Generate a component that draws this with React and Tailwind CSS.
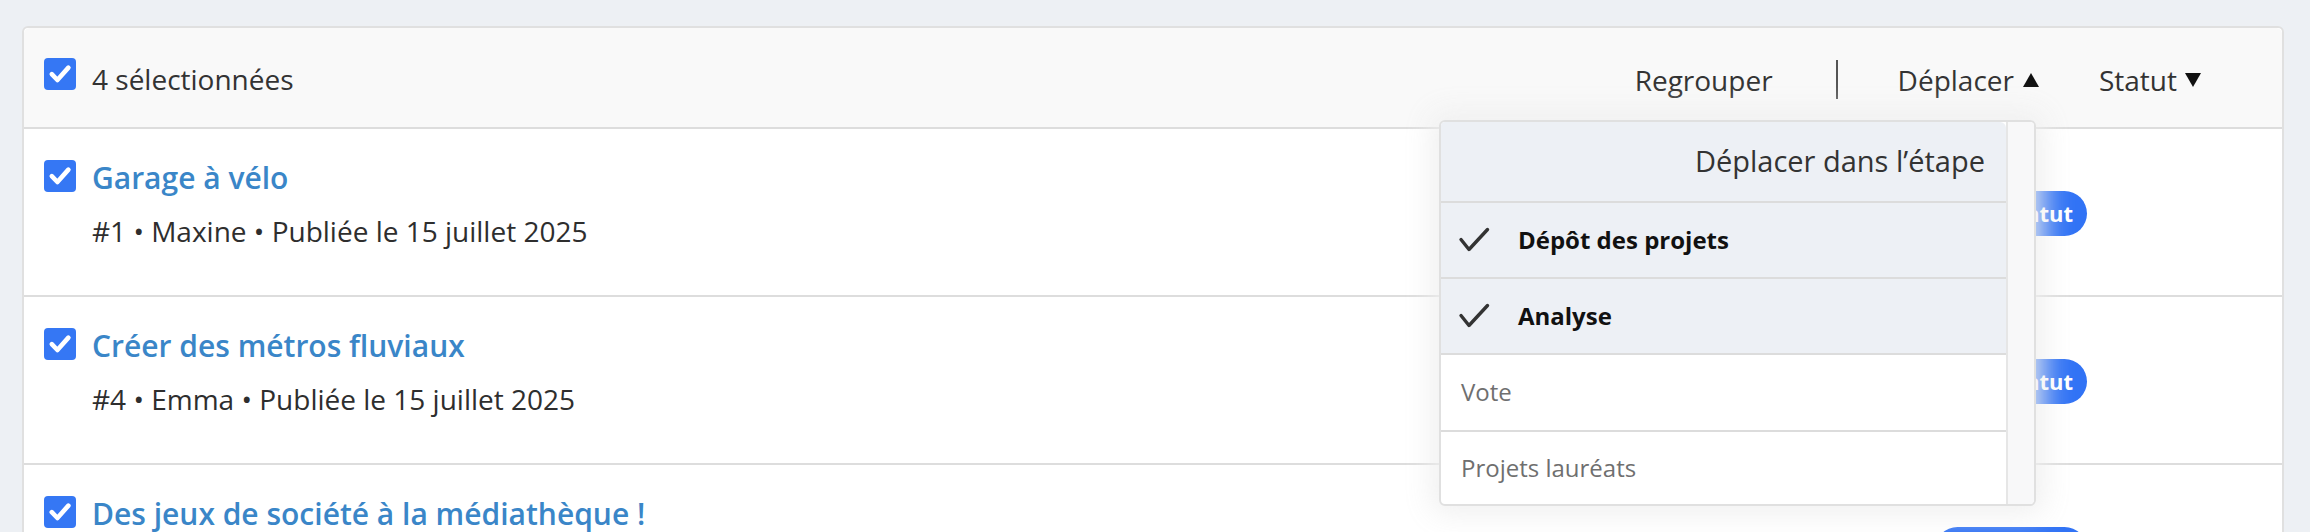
import React from 'react';

const proposals = [
  { id: 1, title: 'Garage à vélo', author: 'Maxine', date: '15 juillet 2025' },
  { id: 4, title: 'Créer des métros fluviaux', author: 'Emma', date: '15 juillet 2025' },
  { id: 6, title: 'Des jeux de société à la médiathèque !', author: 'Lucas', date: '15 juillet 2025' },
  { id: 9, title: 'Un potager partagé dans le parc', author: 'Inès', date: '15 juillet 2025' },
];

const stages = [
  { label: 'Dépôt des projets', checked: true },
  { label: 'Analyse', checked: true },
  { label: 'Vote', checked: false },
  { label: 'Projets lauréats', checked: false, last: true },
];

function Checkbox() {
  return (
    <svg width="32" height="32" viewBox="0 0 32 32" className="shrink-0">
      <rect width="32" height="32" rx="4" fill="#3577f4" />
      <path
        d="M7.8 16.2l5.6 5.8L24.4 9.6"
        fill="none"
        stroke="#fff"
        strokeWidth="4.6"
        strokeLinecap="round"
        strokeLinejoin="round"
      />
    </svg>
  );
}

function Caret({ up }) {
  return (
    <svg width="16" height="14" viewBox="0 0 16 14" className="shrink-0">
      <polygon points={up ? '8,0 16,14 0,14' : '0,0 16,0 8,14'} fill="#111" />
    </svg>
  );
}

function StageCheck() {
  return (
    <svg width="32" height="26" viewBox="0 0 32 26" className="shrink-0">
      <polyline
        points="3,12.5 11,22.5 29.5,2.5"
        fill="none"
        stroke="#333"
        strokeWidth="3.4"
        strokeLinecap="round"
        strokeLinejoin="round"
      />
    </svg>
  );
}

function MoveMenu() {
  return (
    <div className="absolute right-[3px] top-[calc(100%+21px)] z-10 flex h-[386px] w-[597px] overflow-hidden rounded-[6px] border-2 border-[#e0e0e0] bg-white shadow-[0_0_28px_8px_rgba(238,238,238,0.9)]">
      <div className="flex flex-1 flex-col">
        <div className="flex h-[81px] shrink-0 items-center justify-end rounded-tr-[6px] border-b-2 border-[#dcdcdc] bg-[#edf0f5] pr-[21px] text-[29px] text-[#333]">
          Déplacer dans l’étape
        </div>
        {stages.map((stage) =>
          stage.checked ? (
            <div
              key={stage.label}
              className="flex h-[76px] shrink-0 items-center border-b-2 border-[#dcdcdc] bg-[#edf0f5] pl-[17px] text-[24px] font-bold text-[#111]"
            >
              <StageCheck />
              <span className="ml-[28px]">{stage.label}</span>
            </div>
          ) : (
            <div
              key={stage.label}
              className={
                stage.last
                  ? 'flex flex-1 items-center pl-[20px] text-[24px] text-[#6f6f6f]'
                  : 'flex h-[77px] shrink-0 items-center border-b-2 border-[#dcdcdc] pl-[20px] text-[24px] text-[#6f6f6f]'
              }
            >
              {stage.label}
            </div>
          )
        )}
      </div>
      <div className="w-[28px] border-l-2 border-[#e6e6e6] bg-[#f8f8f9]" />
    </div>
  );
}

export default function App() {
  return (
    <div className="min-h-screen bg-[#edf0f4] pl-[22px] pr-[26px] pt-[26px] font-['Open_Sans',sans-serif] text-[#333]">
      <div className="relative rounded-[6px] border-2 border-[#e0e0e0] bg-white">
        <div className="flex h-[101px] items-start rounded-t-[6px] border-b-2 border-[#dddddd] bg-[#f9f9f9] pl-[20px] pr-[81px] pt-[30px]">
          <Checkbox />
          <span className="ml-[16px] mt-[2px] text-[28px] leading-[38px]">4 sélectionnées</span>

          <div className="ml-auto mt-[2px] flex items-center text-[28px] leading-[38px]">
            <button className="text-[#333]">Regrouper</button>
            <div className="ml-[63px] mr-[60px] h-[39px] w-[2px] bg-[#555]" />
            <div className="relative">
              <button className="flex items-center gap-[9px] text-[#333]">
                Déplacer
                <Caret up />
              </button>
              <MoveMenu />
            </div>
            <button className="ml-[60px] flex items-center gap-[8px] text-[#333]">
              Statut
              <Caret />
            </button>
          </div>
        </div>

        {proposals.map((p) => (
          <div
            key={p.id}
            className="flex h-[168px] items-start border-b-2 border-[#dddddd] pl-[20px] pr-[195px] pt-[29px]"
          >
            <div className="mt-[2px]">
              <Checkbox />
            </div>
            <div className="ml-[16px] flex-1">
              <a className="block text-[30px] font-semibold leading-[40px] text-[#3a86c8]">{p.title}</a>
              <p className="mt-[8px] text-[28px] leading-[50px] text-[#2e2e2e]">
                #{p.id} • {p.author} • Publiée le {p.date}
              </p>
            </div>
            <span className="mt-[33px] flex h-[45px] items-center rounded-full bg-[#3173f5] px-[14px] text-[22px] font-bold text-white">
              Sans statut
            </span>
          </div>
        ))}
      </div>
    </div>
  );
}
